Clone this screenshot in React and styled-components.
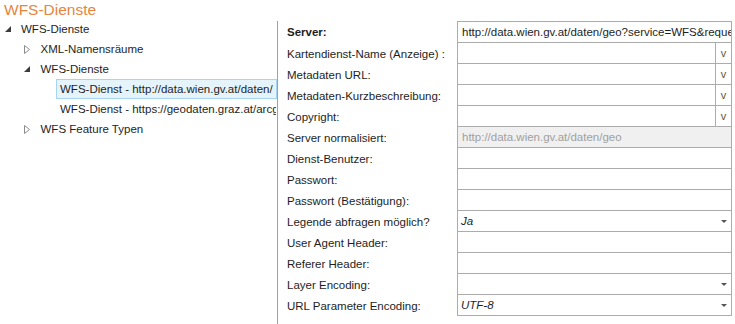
import React from "react";
import styled, { createGlobalStyle } from "styled-components";

const GlobalStyle = createGlobalStyle`
  html, body {
    margin: 0;
    padding: 0;
    background: #fff;
  }
  body {
    font-family: "Liberation Sans", Arial, sans-serif;
    font-size: 11.5px;
    color: #1e1e1e;
  }
`;

const Page = styled.div`
  width: 735px;
  height: 324px;
  overflow: hidden;
  display: flex;
  flex-direction: column;
`;

const Title = styled.h1`
  margin: 0;
  height: 19px;
  padding-left: 4px;
  font-size: 15.5px;
  font-weight: normal;
  line-height: 19px;
  color: #e6853e;
`;

const Body = styled.div`
  flex: 1;
  display: flex;
  min-height: 0;
`;

const TreePanel = styled.div`
  width: 277px;
  flex-shrink: 0;
  overflow: hidden;
`;

const Divider = styled.div`
  width: 1px;
  margin-top: 2px;
  background: #a0a0a0;
`;

const TreeRow = styled.div`
  display: flex;
  align-items: center;
  height: 20px;
  padding-left: ${(p) => p.$level * 19.5}px;
  white-space: nowrap;
`;

const Toggle = styled.span`
  width: 17px;
  flex-shrink: 0;
  display: flex;
  align-items: center;
  justify-content: center;
  padding-right: 2px;
  box-sizing: border-box;
`;

const ItemText = styled.span`
  flex: 1;
  height: 20px;
  line-height: 18px;
  padding: 0 3px;
  box-sizing: border-box;
  overflow: hidden;
  border: 1px solid ${(p) => (p.$selected ? "#a6d4f2" : "transparent")};
  background: ${(p) => (p.$selected ? "#e5f3fb" : "transparent")};
`;

const FormPanel = styled.div`
  flex: 1;
  padding: 2px 0 0 9px;
`;

const Row = styled.div`
  display: flex;
`;

const Label = styled.div`
  width: 170px;
  height: 21px;
  display: flex;
  align-items: center;
  padding-top: ${(p) => (p.$first ? 1 : 0)}px;
  box-sizing: border-box;
  font-weight: ${(p) => (p.$bold ? "bold" : "normal")};
  white-space: nowrap;
`;

const Field = styled.div`
  width: 275px;
  height: ${(p) => (p.$first ? 22 : 21)}px;
  box-sizing: border-box;
  display: flex;
  border: 1px solid #acacac;
  border-top-width: ${(p) => (p.$first ? 1 : 0)}px;
  background: ${(p) => (p.$disabled ? "#f0f0f0" : "#fff")};
  color: ${(p) => (p.$disabled ? "#a0a0a0" : "#1e1e1e")};
`;

const Value = styled.div`
  flex: 1;
  min-width: 0;
  display: flex;
  align-items: center;
  padding-left: ${(p) => (p.$italic ? 3 : 4)}px;
  white-space: nowrap;
  overflow: hidden;
  font-style: ${(p) => (p.$italic ? "italic" : "normal")};
`;

const MoreButton = styled.div`
  width: 15px;
  flex-shrink: 0;
  border-left: 1px solid #acacac;
  display: flex;
  align-items: center;
  justify-content: center;
  font-size: 11px;
  color: #6b5630;
`;

const Caret = styled.div`
  width: 14px;
  flex-shrink: 0;
  display: flex;
  align-items: center;
  justify-content: center;
  &::after {
    content: "";
    border-left: 3px solid transparent;
    border-right: 3px solid transparent;
    border-top: 3px solid #555;
    margin-top: 1px;
  }
`;

function Expander({ open }) {
  if (open) {
    return (
      <svg width="6" height="6" viewBox="0 0 6 6">
        <path d="M6 0 L6 6 L0 6 Z" fill="#3c3c3c" />
      </svg>
    );
  }
  return (
    <svg width="6" height="9" viewBox="0 0 6 9">
      <path d="M0.5 0.5 L5.5 4.5 L0.5 8.5 Z" fill="none" stroke="#8c8c8c" />
    </svg>
  );
}

const tree = [
  { level: 0, text: "WFS-Dienste", toggle: "open" },
  { level: 1, text: "XML-Namensräume", toggle: "closed" },
  { level: 1, text: "WFS-Dienste", toggle: "open" },
  { level: 2, text: "WFS-Dienst - http://data.wien.gv.at/daten/", selected: true },
  { level: 2, text: "WFS-Dienst - https://geodaten.graz.at/arcgis/services" },
  { level: 1, text: "WFS Feature Typen", toggle: "closed" },
];

const fields = [
  { label: "Server:", bold: true, value: "http://data.wien.gv.at/daten/geo?service=WFS&request=GetCapabilities" },
  { label: "Kartendienst-Name (Anzeige) :", more: true },
  { label: "Metadaten URL:", more: true },
  { label: "Metadaten-Kurzbeschreibung:", more: true },
  { label: "Copyright:", more: true },
  { label: "Server normalisiert:", value: "http://data.wien.gv.at/daten/geo", disabled: true },
  { label: "Dienst-Benutzer:" },
  { label: "Passwort:" },
  { label: "Passwort (Bestätigung):" },
  { label: "Legende abfragen möglich?", value: "Ja", italic: true, select: true },
  { label: "User Agent Header:" },
  { label: "Referer Header:" },
  { label: "Layer Encoding:", select: true },
  { label: "URL Parameter Encoding:", value: "UTF-8", italic: true, select: true },
];

export default function App() {
  return (
    <Page>
      <GlobalStyle />
      <Title>WFS-Dienste</Title>
      <Body>
        <TreePanel>
          {tree.map((item, i) => (
            <TreeRow key={i} $level={item.level}>
              <Toggle>{item.toggle && <Expander open={item.toggle === "open"} />}</Toggle>
              <ItemText $selected={item.selected}>{item.text}</ItemText>
            </TreeRow>
          ))}
        </TreePanel>
        <Divider />
        <FormPanel>
          {fields.map((f, i) => (
            <Row key={i}>
              <Label $bold={f.bold} $first={i === 0}>{f.label}</Label>
              <Field $first={i === 0} $disabled={f.disabled}>
                <Value $italic={f.italic}>{f.value}</Value>
                {f.more && <MoreButton>v</MoreButton>}
                {f.select && <Caret />}
              </Field>
            </Row>
          ))}
        </FormPanel>
      </Body>
    </Page>
  );
}
